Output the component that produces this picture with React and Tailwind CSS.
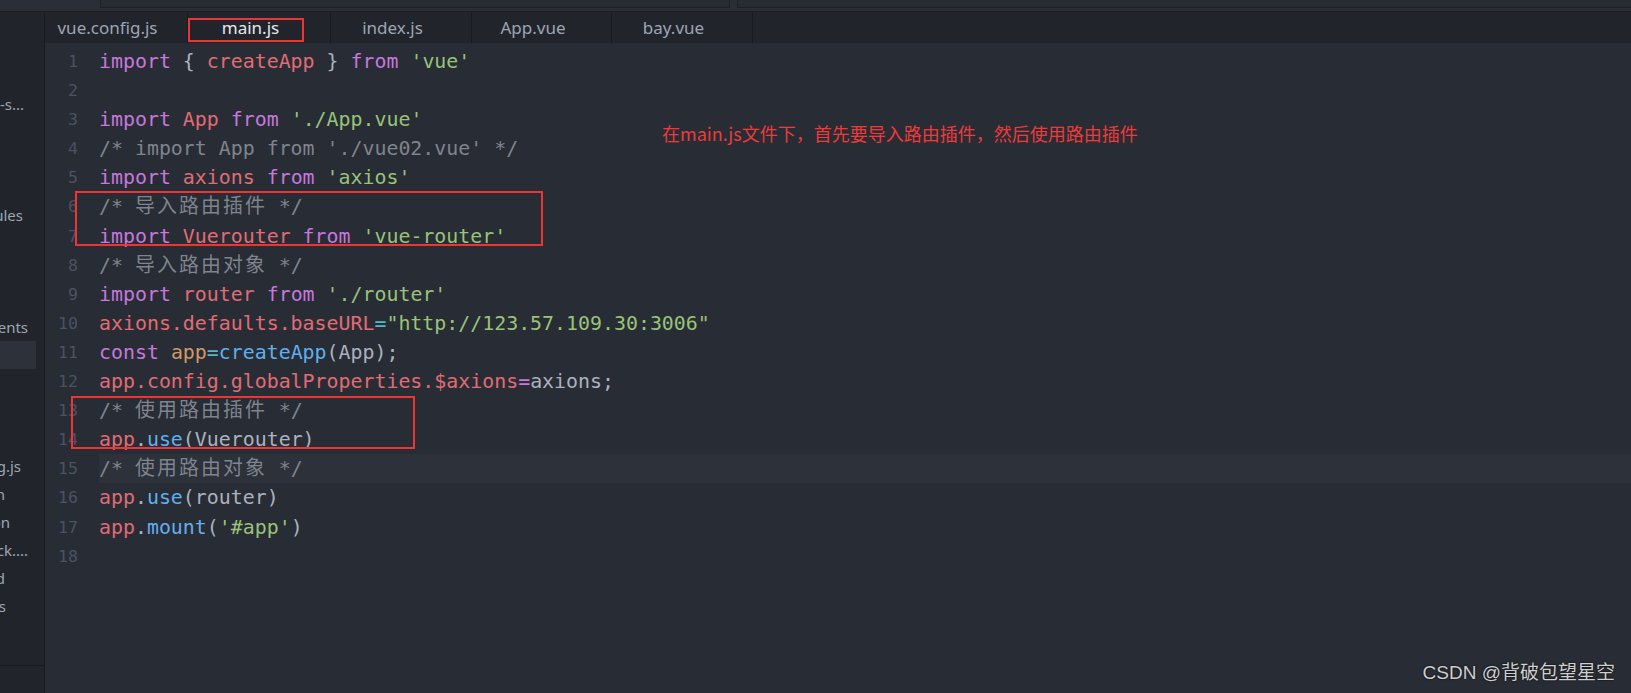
const tone = {
  k: 'text-[#c678dd]',
  v: 'text-[#e06c75]',
  s: 'text-[#98c379]',
  c: 'text-[#7f848e]',
  cz: 'text-[#7f848e] tracking-[2.1px]',
  f: 'text-[#61afef]',
  p: 'text-[#abb2bf]',
  o: 'text-[#d19a66]',
  op: 'text-[#56b6c2]',
};

const lines = [
  [['k', 'import'], ['p', ' { '], ['v', 'createApp'], ['p', ' } '], ['k', 'from'], ['p', ' '], ['s', "'vue'"]],
  [],
  [['k', 'import'], ['p', ' '], ['v', 'App'], ['p', ' '], ['k', 'from'], ['p', ' '], ['s', "'./App.vue'"]],
  [['c', "/* import App from './vue02.vue' */"]],
  [['k', 'import'], ['p', ' '], ['v', 'axions'], ['p', ' '], ['k', 'from'], ['p', ' '], ['s', "'axios'"]],
  [['c', '/* '], ['cz', '导入路由插件'], ['c', ' */']],
  [['k', 'import'], ['p', ' '], ['v', 'Vuerouter'], ['p', ' '], ['k', 'from'], ['p', ' '], ['s', "'vue-router'"]],
  [['c', '/* '], ['cz', '导入路由对象'], ['c', ' */']],
  [['k', 'import'], ['p', ' '], ['v', 'router'], ['p', ' '], ['k', 'from'], ['p', ' '], ['s', "'./router'"]],
  [['v', 'axions.defaults.baseURL'], ['op', '='], ['s', '"http://123.57.109.30:3006"']],
  [['k', 'const'], ['p', ' '], ['o', 'app'], ['op', '='], ['f', 'createApp'], ['p', '(App);']],
  [['v', 'app.config.globalProperties.$axions'], ['k', '='], ['p', 'axions;']],
  [['c', '/* '], ['cz', '使用路由插件'], ['c', ' */']],
  [['v', 'app'], ['p', '.'], ['f', 'use'], ['p', '(Vuerouter)']],
  [['c', '/* '], ['cz', '使用路由对象'], ['c', ' */']],
  [['v', 'app'], ['p', '.'], ['f', 'use'], ['p', '(router)']],
  [['v', 'app'], ['p', '.'], ['f', 'mount'], ['p', '('], ['s', "'#app'"], ['p', ')']],
  [],
];

// tree rows, clipped on the left; pr sets where the visible tail ends
const tree = [
  { t: 'vue-s...', pr: 'pr-[12px]' },
  null, null, null,
  { t: 'node_modules', pr: 'pr-[13px]' },
  null, null, null,
  { t: 'components', pr: 'pr-[8px]' },
  { t: '', pr: '', sel: true },
  null, null, null,
  { t: 'vue.config.js', pr: 'pr-[15px]' },
  { t: 'package.json', pr: 'pr-[31px]' },
  { t: 'jsconfig.json', pr: 'pr-[26px]' },
  { t: 'package-lock....', pr: 'pr-[8px]' },
  { t: 'README.md', pr: 'pr-[31px]' },
  { t: 'babel.configs', pr: 'pr-[30px]' },
];

const tabs = [
  { name: 'vue.config.js', w: 'w-[143px]' },
  { name: 'main.js', w: 'w-[143px]', active: true },
  { name: 'index.js', w: 'w-[141px]' },
  { name: 'App.vue', w: 'w-[140px]' },
  { name: 'bay.vue', w: 'w-[141px]' },
];

export default function App() {
  return (
    <div className="relative w-[1631px] h-[693px] overflow-hidden bg-[#282c34] flex flex-col font-['Noto_Sans','Noto_Sans_CJK_SC',sans-serif]">
      {/* top strip */}
      <div className="h-[12px] shrink-0 flex bg-[#2a2e36] border-b border-[#1b1e23]">
        <div className="ml-[100px] w-[630px] h-[8px] bg-[#272b32] border-x border-b border-[#1d2026]" />
        <div className="ml-[7px] flex-1 h-[8px] bg-[#272b32] border-l border-b border-[#1d2026]" />
      </div>

      <div className="flex flex-1 min-h-0">
        {/* tree */}
        <aside className="w-[45px] shrink-0 bg-[#21252b] border-r border-[#181a1f] flex flex-col">
          <div className="flex flex-1 min-h-0">
            <div className="w-[36px] pt-[78px] text-[15px] text-[#9da5b4]">
              {tree.map((row, i) => (
                <div
                  key={i}
                  className={`h-[27.9px] flex items-center justify-end overflow-hidden whitespace-nowrap ${row && row.sel ? 'bg-[#2c313a]' : ''} ${row ? row.pr : ''}`}
                >
                  {row ? row.t : ''}
                </div>
              ))}
            </div>
            <div className="flex-1" />
          </div>
          <div className="h-[28px] shrink-0 border-t border-[#181a1f]" />
        </aside>

        <main className="flex-1 flex flex-col min-w-0">
          {/* tabs */}
          <div className="h-[31px] shrink-0 flex bg-[#21252b]">
            {tabs.map((tab) => (
              <div
                key={tab.name}
                className={`${tab.w} h-full flex items-center justify-center pr-[17px] border-r border-[#181a1f] text-[17px] ${tab.active ? 'text-[#e6e8ec]' : 'text-[#9da5b4]'}`}
              >
                {tab.name}
              </div>
            ))}
          </div>

          {/* editor */}
          <div className="flex-1 pt-[4px] font-['DejaVu_Sans_Mono','Noto_Sans_CJK_SC',monospace]">
            {lines.map((tokens, i) => (
              <div key={i} className="flex h-[29.1px] leading-[29.1px]">
                <div className="w-[54px] shrink-0 pr-[21px] text-right text-[16.6px] text-[#4b5263]">{i + 1}</div>
                <div className={`flex-1 whitespace-pre text-[19.9px] ${i === 14 ? 'bg-[#2c313a]' : ''}`}>
                  {tokens.map(([k, t], j) => (
                    <span key={j} className={tone[k]}>{t}</span>
                  ))}
                </div>
              </div>
            ))}
          </div>
        </main>
      </div>

      {/* annotations drawn over the screenshot */}
      <div className="absolute left-[188px] top-[18px] w-[116px] h-[24px] border-2 border-[#ee3535]" />
      <div className="absolute left-[75px] top-[191px] w-[468px] h-[55px] border-2 border-[#ee3535]" />
      <div className="absolute left-[71px] top-[396px] w-[344px] h-[53px] border-2 border-[#ee3535]" />
      <div className="absolute left-[662px] top-[121px] text-[18px] leading-[24px] text-[#ee3a3a] font-['Noto_Sans_CJK_SC',sans-serif]">
        在main.js文件下，首先要导入路由插件，然后使用路由插件
      </div>
      <div className="absolute right-[16px] top-[661px] text-[19px] leading-[24px] text-[#cfcfcf] [text-shadow:0_0_2px_#000] font-['Liberation_Sans','Noto_Sans_CJK_SC',sans-serif]">
        CSDN @背破包望星空
      </div>
    </div>
  );
}
